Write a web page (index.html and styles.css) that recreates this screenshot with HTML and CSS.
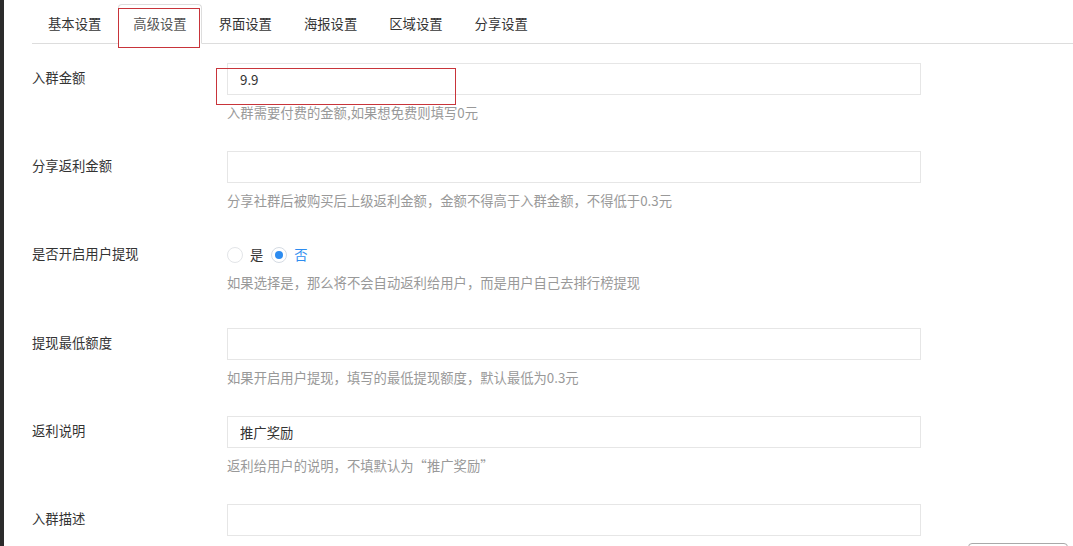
FILE: index.html
```html
<!DOCTYPE html>
<html lang="zh-CN">
<head>
  <meta charset="UTF-8" />
  <title>高级设置</title>
  <link rel="stylesheet" href="styles.css">
</head>
<body>

  <ul class="nav-tabs">
    <li class="tab">基本设置</li>
    <li class="tab active">高级设置<span class="mark mark-tab"></span></li>
    <li class="tab">界面设置</li>
    <li class="tab">海报设置</li>
    <li class="tab">区域设置</li>
    <li class="tab">分享设置</li>
  </ul>

  <form class="settings">
    <div class="form-row">
      <label class="form-label">入群金额</label>
      <div class="form-field">
        <div class="input-wrap">
          <input type="text" class="form-input" value="9.9" />
          <span class="mark mark-input"></span>
        </div>
        <p class="help">入群需要付费的金额,如果想免费则填写0元</p>
      </div>
    </div>

    <div class="form-row">
      <label class="form-label">分享返利金额</label>
      <div class="form-field">
        <input type="text" class="form-input" value="" />
        <p class="help">分享社群后被购买后上级返利金额，金额不得高于入群金额，不得低于0.3元</p>
      </div>
    </div>

    <div class="form-row form-row-radio">
      <label class="form-label">是否开启用户提现</label>
      <div class="form-field">
        <div class="radio-group">
          <label class="radio"><span class="radio-dot"></span>是</label>
          <label class="radio checked"><span class="radio-dot"></span>否</label>
        </div>
        <p class="help">如果选择是，那么将不会自动返利给用户，而是用户自己去排行榜提现</p>
      </div>
    </div>

    <div class="form-row">
      <label class="form-label">提现最低额度</label>
      <div class="form-field">
        <input type="text" class="form-input" value="" />
        <p class="help">如果开启用户提现，填写的最低提现额度，默认最低为0.3元</p>
      </div>
    </div>

    <div class="form-row">
      <label class="form-label">返利说明</label>
      <div class="form-field">
        <input type="text" class="form-input" value="推广奖励" />
        <p class="help">返利给用户的说明，不填默认为“推广奖励”</p>
      </div>
    </div>

    <div class="form-row">
      <label class="form-label">入群描述</label>
      <div class="form-field">
        <input type="text" class="form-input" value="" />
      </div>
    </div>
  </form>

  <button class="save-btn" type="button" aria-label="保存"></button>

</body>
</html>
```

FILE: styles.css
```css
* {
  box-sizing: border-box;
}

html, body {
  height: 100%;
}

body {
  margin: 0;
  border-left: 4px solid #2b2b2b;
  padding: 4px 0 0 28px;
  font-family: "Microsoft YaHei", "Noto Sans CJK SC", sans-serif;
  font-size: 13.33px;
  color: #333;
  background: #fff;
  overflow: hidden;
}

/* TABS */
.nav-tabs {
  display: flex;
  margin: 0;
  padding: 0 0 0 1px;
  list-style: none;
  border-bottom: 1px solid #ddd;
}

.tab {
  position: relative;
  padding: 10px 14px;
  margin-right: 2px;
  margin-bottom: -1px;
  line-height: 18px;
  border: 1px solid transparent;
  border-radius: 4px 4px 0 0;
  color: #333;
  cursor: pointer;
}

.tab.active {
  color: #555;
  background: #fff;
  border-color: #ddd;
  border-bottom-color: #fff;
}

/* red annotation boxes */
.mark {
  position: absolute;
  border: 1px solid #c8343a;
  pointer-events: none;
}

.mark-tab {
  left: -1px;
  top: 3px;
  width: 82px;
  height: 40px;
}

.mark-input {
  left: -11px;
  top: 5px;
  width: 240px;
  height: 37px;
}

/* FORM */
.settings {
  margin-top: 19px;
  width: 889px;
}

.form-row {
  display: grid;
  grid-template-columns: 195px 1fr;
  margin-bottom: 29px;
}

.form-label {
  padding-top: 6px;
  line-height: 18px;
  color: #333;
}

.input-wrap {
  position: relative;
}

.form-input {
  display: block;
  width: 100%;
  height: 32px;
  padding: 0 12px;
  border: 1px solid #e6e6e6;
  border-radius: 0;
  font-family: inherit;
  font-size: 13.33px;
  color: #333;
  outline: none;
}

.help {
  margin: 9px 0 0;
  line-height: 18px;
  color: #999;
}

/* RADIO */
.form-row-radio {
  margin-bottom: 36px;
}

.form-row-radio .help {
  margin-top: 3px;
}

.radio-group {
  display: flex;
  align-items: center;
  height: 32px;
}

.radio {
  display: flex;
  align-items: center;
  margin-right: 8px;
  color: #333;
  line-height: 18px;
}

.radio-dot {
  position: relative;
  width: 16px;
  height: 16px;
  margin-right: 7px;
  border: 1px solid #e3e5e8;
  border-radius: 50%;
  background: #fff;
}

.radio.checked {
  color: #2d8cf0;
}

.radio.checked .radio-dot {
  border-color: #d5dbe3;
}

.radio.checked .radio-dot::after {
  content: "";
  position: absolute;
  left: 3px;
  top: 3px;
  width: 8px;
  height: 8px;
  border-radius: 50%;
  background: #2d8cf0;
}

/* floating save button */
.save-btn {
  position: fixed;
  right: 5px;
  bottom: -31px;
  width: 100px;
  height: 34px;
  border: 1px solid #a9a9a9;
  border-radius: 4px;
  background: #fff;
}
```
